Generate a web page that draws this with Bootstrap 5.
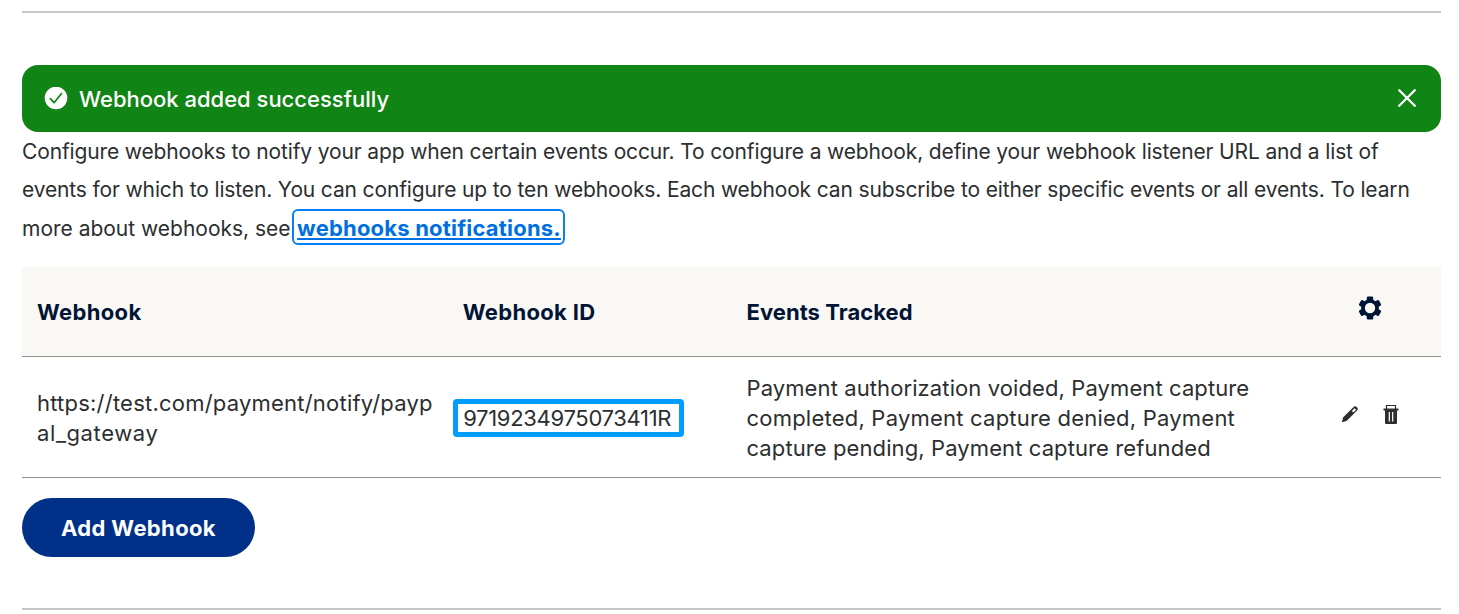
<!DOCTYPE html>
<html lang="en">
<head>
<meta charset="utf-8">
<meta name="viewport" content="width=device-width, initial-scale=1">
<title>Webhooks</title>
<link href="https://cdn.jsdelivr.net/npm/bootstrap@5.3.0/dist/css/bootstrap.min.css" rel="stylesheet">
<style>
  body { font-family: Inter, "Liberation Sans", sans-serif; font-size: 22px; line-height: 30px; color: #2c2e2f; background: #fff; overflow: hidden; }
  .page-wrap { padding: 11px 18px 0 22px; }
  .rule { height: 2px; background: #c6c6c6; }
  .rule-end { margin-top: 51px; }
  .notice { height: 67px; margin-top: 52px; padding: 0 22px; background: #108414; color: #fff; border-radius: 16px; font-weight: 500; letter-spacing: 0; }
  .notice .close-btn { line-height: 0; margin-top: -1px; }
  .notice-text { padding-left: 11px; }
  .intro { font-size: 21px; line-height: 38.4px; letter-spacing: -.14px; height: 135px; padding-top: 1px; }
  .intro .line-end { letter-spacing: -.01px; }
  .doc-link { font-size: 22px; line-height: 26px; font-weight: 700; letter-spacing: .2px; color: #0070e0; text-decoration: underline; text-decoration-thickness: 2px; text-underline-offset: 2px; text-decoration-skip-ink: none; border: 2px solid #097ff5; border-radius: 6px; padding: 4px 2px 2px 3px; margin-left: 1.5px; }
  .hooks { display: grid; grid-template-columns: 30% 20% 40% 10%; border-bottom: 1px solid #909191; }
  .hooks > div { padding: 15px; }
  .hooks-head { height: 90px; background: #faf8f5; color: #001435; font-weight: 700; letter-spacing: .34px; }
  .hooks-head .head-events { letter-spacing: .05px; }
  .hooks-head .head-tools { padding-bottom: 23px; }
  .hooks-body { height: 121px; padding-top: 1px; }
  .hook-url { letter-spacing: .22px; }
  .hook-url .rest { letter-spacing: .6px; }
  .hook-id { letter-spacing: -.31px; border: 5px solid #009cff; border-radius: 4px; margin: 0 -9.500px; padding: 0 9px 0 5px; height: 38px; line-height: 28px; width: 231px; }
  .events { letter-spacing: .1px; }
  .events .mid { letter-spacing: .22px; }
  .btn-add { width: 233px; height: 59px; margin-top: 20px; padding-top: 7px; font-size: 22px; font-weight: 700; letter-spacing: .36px; background: #003087; color: #fff; }
  .btn-add:hover { background: #001c64; color: #fff; }
</style>
</head>
<body>
<main class="page-wrap">
  <div class="rule"></div>

  <div class="notice d-flex align-items-center" role="alert">
    <svg width="24" height="24" viewBox="0 0 24 24" aria-hidden="true"><circle cx="12" cy="11" r="11.3" fill="#fff"/><path d="M6.300 11.700l3.800 4L17.500 6.500" fill="none" stroke="#108414" stroke-width="1.700" stroke-linecap="round" stroke-linejoin="round"/></svg>
    <span class="notice-text flex-grow-1">Webhook added successfully</span>
    <button type="button" class="close-btn btn p-0 border-0" aria-label="Close">
      <svg width="24" height="24" viewBox="0 0 24 24"><path d="M4.200 4.200l15.600 15.600M19.800 4.200L4.200 19.800" fill="none" stroke="#fff" stroke-width="2.300" stroke-linecap="round"/></svg>
    </button>
  </div>

  <p class="intro mb-0 text-nowrap">Configure webhooks to notify your app when certain events occur. To configure a webhook, define your webhook listener URL and a list of<br>
  events for which to listen. You can configure up to ten webhooks. Each webhook can subscribe to either specific events or all events. To learn<br>
  <span class="line-end">more about webhooks, see</span><a class="doc-link" href="#">webhooks notifications.</a></p>

  <div class="hooks hooks-head align-items-center">
    <div>Webhook</div>
    <div class="text-nowrap">Webhook ID</div>
    <div class="head-events">Events Tracked</div>
    <div class="head-tools d-flex justify-content-center">
      <svg width="24" height="24" viewBox="-12 -12 24 24" aria-label="Settings"><g fill="#001435"><circle r="8.800"/><rect x="-3.200" y="-11.500" width="6.400" height="23" rx="1.300"/><rect x="-3.200" y="-11.500" width="6.400" height="23" rx="1.300" transform="rotate(60)"/><rect x="-3.200" y="-11.500" width="6.400" height="23" rx="1.300" transform="rotate(120)"/></g><circle r="5.200" fill="#faf8f5"/></svg>
    </div>
  </div>

  <div class="hooks hooks-body align-items-center">
    <div class="hook-url text-nowrap">https://test.com/payment/notify/payp<br><span class="rest">al_gateway</span></div>
    <div><div class="hook-id text-nowrap">9719234975073411R</div></div>
    <div class="events text-nowrap">Payment authorization voided, Payment capture<br><span class="mid">completed, Payment capture denied, Payment</span><br>capture pending, Payment capture refunded</div>
    <div class="d-flex justify-content-center gap-4 pb-4">
      <svg width="18" height="20" viewBox="0 0 18 20" aria-label="Edit"><path d="M.9 18.200L2 13.500 12.300 3.200q1.800-1.800 3.600 0 1.800 1.600 0 3.500L5.500 17z" fill="#2c2e2f"/><path d="M10.900 6.900l2.600-2.700 1.600 1.500-2.700 2.700z" fill="#fff"/></svg>
      <svg width="16" height="20" viewBox="0 0 16 20" aria-label="Delete"><path d="M3.500 5V1.500h9V5" fill="none" stroke="#2c2e2f" stroke-width="1.200"/><path d="M.5 4.500h15v2H.5zM2 6.500h12V19a1 1 0 0 1-1 1H3a1 1 0 0 1-1-1z" fill="#2c2e2f"/><path d="M6.300 8v9.500M9.700 8v9.500" stroke="#fff" stroke-width="1.200"/></svg>
    </div>
  </div>

  <button type="button" class="btn btn-add rounded-pill border-0 d-block">Add Webhook</button>
  <div class="rule rule-end"></div>
</main>
<script src="https://cdn.jsdelivr.net/npm/bootstrap@5.3.0/dist/js/bootstrap.bundle.min.js"></script>
</body>
</html>
